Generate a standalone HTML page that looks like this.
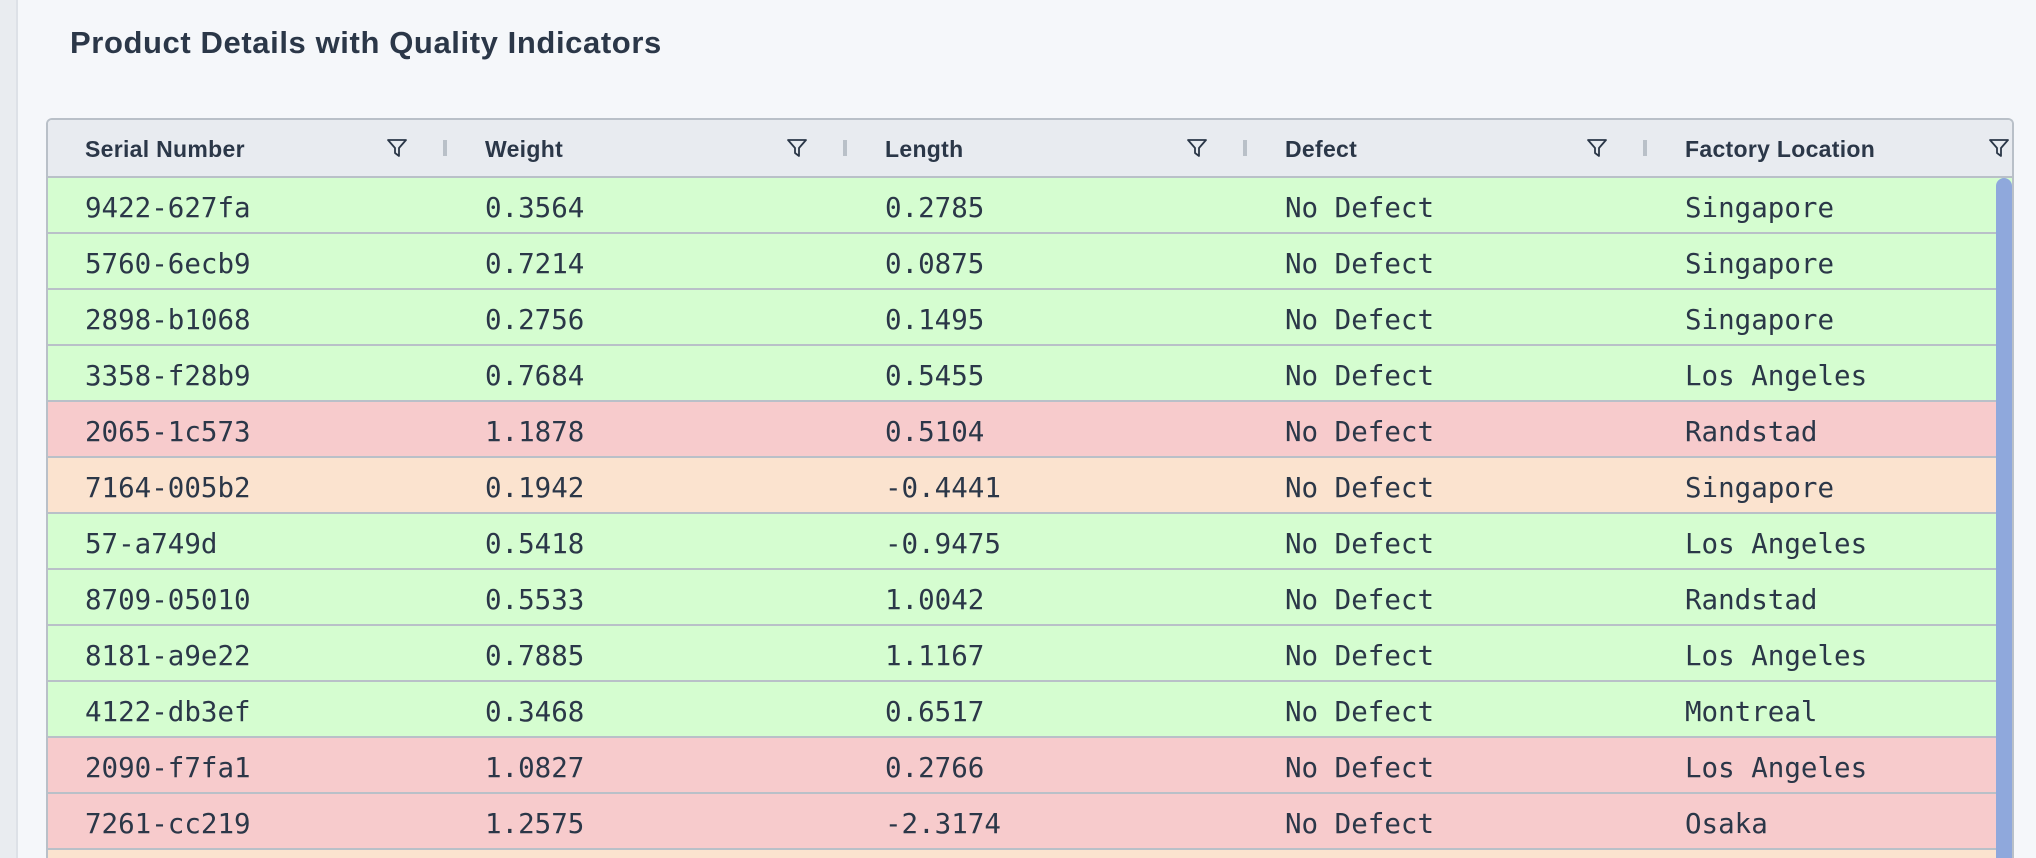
<!DOCTYPE html>
<html><head><meta charset="utf-8"><style>
*{margin:0;padding:0;box-sizing:border-box}
html,body{width:2036px;height:858px;overflow:hidden}
body{background:#f5f7fa;position:relative;font-family:"Liberation Sans",sans-serif;color:#2b3748}
.strip{position:absolute;left:0;top:0;width:18px;height:858px;background:#e9ecf0;border-right:2px solid #dde1e7}
h1{position:absolute;left:70px;top:25px;font-size:31px;font-weight:bold;color:#2b3748;letter-spacing:0.6px}
.tbl{position:absolute;left:46px;top:118px;width:1968px;height:740px;border:2px solid #b9c0c8;border-bottom:none;border-radius:6px 6px 0 0;overflow:hidden;background:#fff}
.hdr{height:58px;background:#e8ebf0;border-bottom:2px solid #b9c0c8;position:relative}
.hc{position:absolute;top:1px;height:56px;line-height:56px;font-weight:bold;font-size:23px;letter-spacing:0.3px}
.flt{position:absolute;top:18px;width:22px;height:20px}
.sep{position:absolute;top:20px;width:4px;height:16px;background:#b9c0c8}
.body{position:absolute;left:0;top:58px;right:0;height:682px;overflow:hidden}
.row{height:56px;border-bottom:2px solid #b9c0c8;position:relative;font-family:"DejaVu Sans Mono","Liberation Mono",monospace;font-size:27.5px}
.row span{position:absolute;top:3px;line-height:54px}
.g{background:#d5fdd0}.r{background:#f7cbcc}.o{background:#fbe3cf}
.sb{position:absolute;right:0;top:58px;width:16px;height:700px;background:#8fa8dc;border-radius:8px 8px 0 0}
</style></head><body>
<div class="strip"></div>
<h1>Product Details with Quality Indicators</h1>
<div class="tbl">
<div class="hdr">
<div class="hc" style="left:37px">Serial Number</div>
<svg class="flt" style="left:338px" viewBox="0 0 22 20"><path d="M2 2h18l-7 8v8l-4-3v-5z" fill="none" stroke="#2b3748" stroke-width="1.8" stroke-linejoin="round"/></svg><div class="sep" style="left:395px"></div>
<div class="hc" style="left:437px">Weight</div>
<svg class="flt" style="left:738px" viewBox="0 0 22 20"><path d="M2 2h18l-7 8v8l-4-3v-5z" fill="none" stroke="#2b3748" stroke-width="1.8" stroke-linejoin="round"/></svg><div class="sep" style="left:795px"></div>
<div class="hc" style="left:837px">Length</div>
<svg class="flt" style="left:1138px" viewBox="0 0 22 20"><path d="M2 2h18l-7 8v8l-4-3v-5z" fill="none" stroke="#2b3748" stroke-width="1.8" stroke-linejoin="round"/></svg><div class="sep" style="left:1195px"></div>
<div class="hc" style="left:1237px">Defect</div>
<svg class="flt" style="left:1538px" viewBox="0 0 22 20"><path d="M2 2h18l-7 8v8l-4-3v-5z" fill="none" stroke="#2b3748" stroke-width="1.8" stroke-linejoin="round"/></svg><div class="sep" style="left:1595px"></div>
<div class="hc" style="left:1637px">Factory Location</div>
<svg class="flt" style="left:1940px" viewBox="0 0 22 20"><path d="M2 2h18l-7 8v8l-4-3v-5z" fill="none" stroke="#2b3748" stroke-width="1.8" stroke-linejoin="round"/></svg>
</div>
<div class="body">
<div class="row g"><span style="left:37px">9422-627fa</span><span style="left:437px">0.3564</span><span style="left:837px">0.2785</span><span style="left:1237px">No Defect</span><span style="left:1637px">Singapore</span></div>
<div class="row g"><span style="left:37px">5760-6ecb9</span><span style="left:437px">0.7214</span><span style="left:837px">0.0875</span><span style="left:1237px">No Defect</span><span style="left:1637px">Singapore</span></div>
<div class="row g"><span style="left:37px">2898-b1068</span><span style="left:437px">0.2756</span><span style="left:837px">0.1495</span><span style="left:1237px">No Defect</span><span style="left:1637px">Singapore</span></div>
<div class="row g"><span style="left:37px">3358-f28b9</span><span style="left:437px">0.7684</span><span style="left:837px">0.5455</span><span style="left:1237px">No Defect</span><span style="left:1637px">Los Angeles</span></div>
<div class="row r"><span style="left:37px">2065-1c573</span><span style="left:437px">1.1878</span><span style="left:837px">0.5104</span><span style="left:1237px">No Defect</span><span style="left:1637px">Randstad</span></div>
<div class="row o"><span style="left:37px">7164-005b2</span><span style="left:437px">0.1942</span><span style="left:837px">-0.4441</span><span style="left:1237px">No Defect</span><span style="left:1637px">Singapore</span></div>
<div class="row g"><span style="left:37px">57-a749d</span><span style="left:437px">0.5418</span><span style="left:837px">-0.9475</span><span style="left:1237px">No Defect</span><span style="left:1637px">Los Angeles</span></div>
<div class="row g"><span style="left:37px">8709-05010</span><span style="left:437px">0.5533</span><span style="left:837px">1.0042</span><span style="left:1237px">No Defect</span><span style="left:1637px">Randstad</span></div>
<div class="row g"><span style="left:37px">8181-a9e22</span><span style="left:437px">0.7885</span><span style="left:837px">1.1167</span><span style="left:1237px">No Defect</span><span style="left:1637px">Los Angeles</span></div>
<div class="row g"><span style="left:37px">4122-db3ef</span><span style="left:437px">0.3468</span><span style="left:837px">0.6517</span><span style="left:1237px">No Defect</span><span style="left:1637px">Montreal</span></div>
<div class="row r"><span style="left:37px">2090-f7fa1</span><span style="left:437px">1.0827</span><span style="left:837px">0.2766</span><span style="left:1237px">No Defect</span><span style="left:1637px">Los Angeles</span></div>
<div class="row r"><span style="left:37px">7261-cc219</span><span style="left:437px">1.2575</span><span style="left:837px">-2.3174</span><span style="left:1237px">No Defect</span><span style="left:1637px">Osaka</span></div>
<div class="row o"></div>
</div>
<div class="sb"></div>
</div>
</body></html>
